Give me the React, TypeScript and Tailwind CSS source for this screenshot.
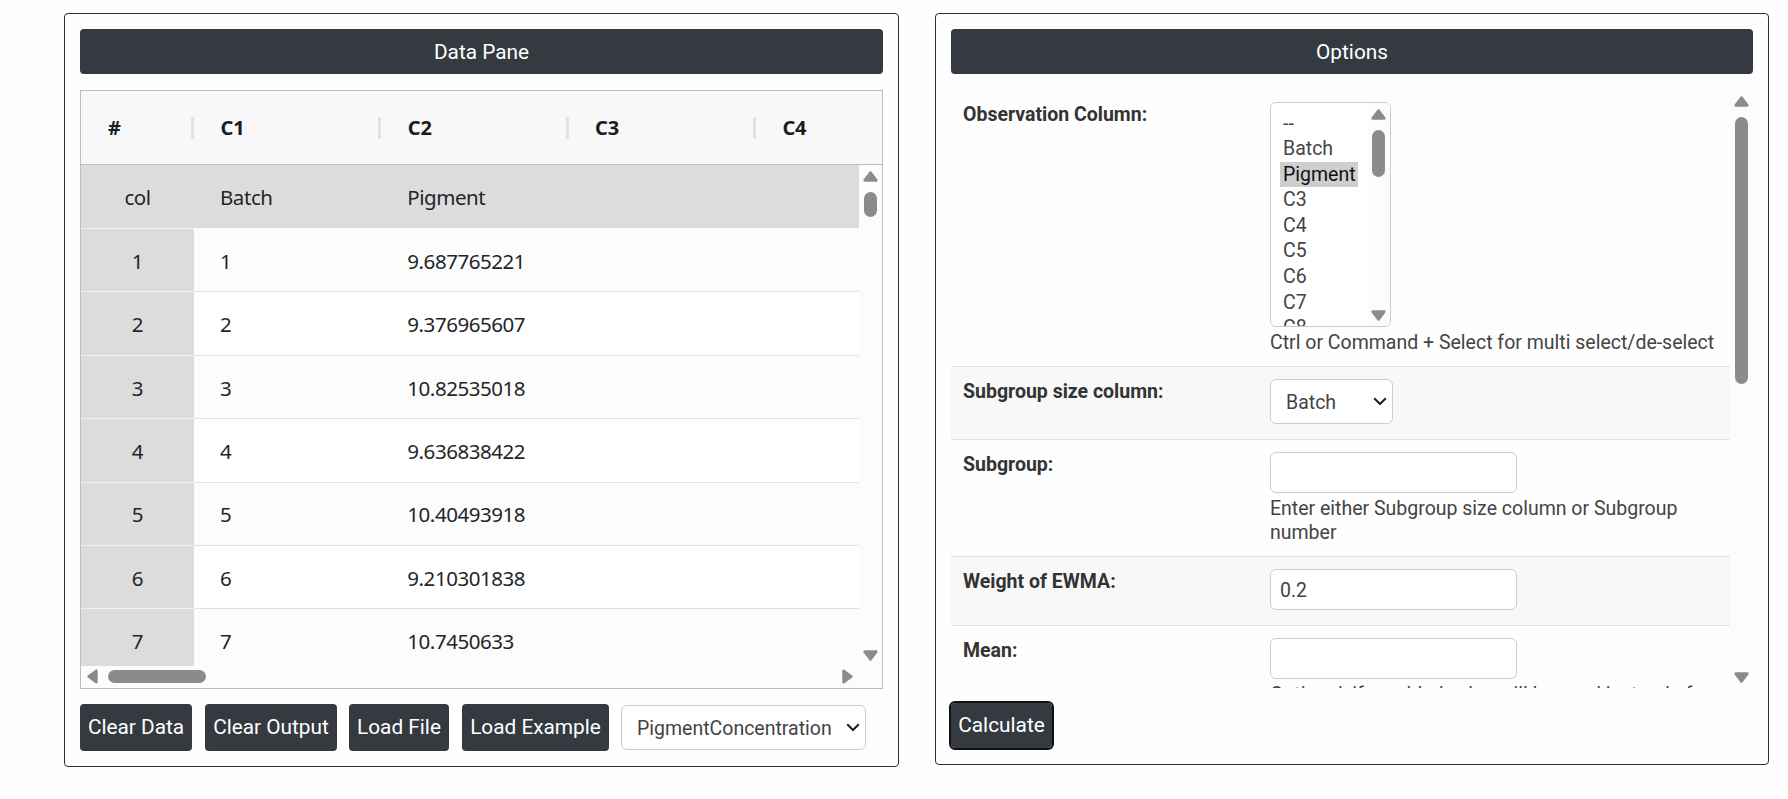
import { useState } from 'react';

const COLUMNS = ['C1', 'C2', 'C3', 'C4'];

const ROWS = [
  ['1', '9.687765221'],
  ['2', '9.376965607'],
  ['3', '10.82535018'],
  ['4', '9.636838422'],
  ['5', '10.40493918'],
  ['6', '9.210301838'],
  ['7', '10.7450633'],
];

const OBSERVATION_OPTIONS = ['--', 'Batch', 'Pigment', 'C3', 'C4', 'C5', 'C6', 'C7', 'C8'];

type Direction = 'up' | 'down' | 'left' | 'right';

const ARROW_ROTATION: Record<Direction, string> = {
  up: 'rotate-0',
  down: 'rotate-180',
  left: '-rotate-90',
  right: 'rotate-90',
};

function Arrow({ direction }: { direction: Direction }) {
  return (
    <svg viewBox="0 0 15 11" className={`w-[15px] h-[11px] shrink-0 ${ARROW_ROTATION[direction]}`}>
      <path
        d="M7.5 1.6 L13.3 9.4 H1.7 Z"
        fill="#8b8b8b"
        stroke="#8b8b8b"
        strokeWidth="2.6"
        strokeLinejoin="round"
      />
    </svg>
  );
}

function Chevron() {
  return (
    <svg viewBox="0 0 14 9" className="w-[14px] h-[9px] shrink-0">
      <path d="M1.2 1.2 L7 7 L12.8 1.2" fill="none" stroke="#222" strokeWidth="2.1" />
    </svg>
  );
}

function PaneTitle({ children }: { children: string }) {
  return (
    <h2 className="h-[45px] shrink-0 rounded bg-[#343a40] text-white text-[20.8px] leading-[46px] text-center">
      {children}
    </h2>
  );
}

function DataGrid() {
  return (
    <div className="mt-4 h-[599px] border border-[#bbbdbf] bg-[#fcfcfc] flex flex-col font-['Noto_Sans',sans-serif] text-[20.5px] tracking-[-0.45px] text-[#222628]">
      {/* Column headers */}
      <div className="h-[74px] shrink-0 flex items-center border-b border-[#bbbdbf] bg-[#f8f8f8] font-bold text-[20px] tracking-[-0.2px] text-[#181d1f] overflow-hidden">
        <div className="w-[113px] shrink-0 flex items-center justify-between pl-[27px]">
          <span className="pt-px">#</span>
          <span className="w-[3px] h-[22px] bg-[#dde2eb]" />
        </div>
        {COLUMNS.map((col) => (
          <div key={col} className="w-[187.3px] shrink-0 flex items-center justify-between pl-[26.5px]">
            <span className="pt-px">{col}</span>
            <span className="w-[3px] h-[22px] bg-[#dde2eb]" />
          </div>
        ))}
      </div>

      <div className="flex h-[501px] shrink-0">
        <div className="w-[778px] overflow-hidden">
          <div className="h-[63px] pt-px flex items-center bg-[#dcdcdc]">
            <div className="w-[113px] text-center">col</div>
            <div className="w-[187.3px] pl-[26px]">Batch</div>
            <div className="pl-[26px]">Pigment</div>
          </div>
          {ROWS.map(([index, value], i) => (
            <div key={index} className={`h-[63.4px] flex ${i % 2 ? 'bg-white' : 'bg-[#fcfcfc]'}`}>
              <div className="w-[113px] pt-[2px] flex items-center justify-center bg-[#dcdcdc] border-t border-[#f0f1f1]">
                {index}
              </div>
              <div
                className={`flex-1 pt-[2px] flex items-center border-t ${i === 0 ? 'border-transparent' : 'border-[#dde2e3]'}`}
              >
                <div className="w-[187.3px] pl-[26px]">{index}</div>
                <div className="pl-[26px]">{value}</div>
              </div>
            </div>
          ))}
        </div>
        <div className="flex-1 flex flex-col items-center pt-[6px] pb-[5px]">
          <Arrow direction="up" />
          <div className="mt-[10px] w-[13px] h-[25px] rounded-full bg-[#8b8b8b]" />
          <div className="mt-auto">
            <Arrow direction="down" />
          </div>
        </div>
      </div>

      <div className="flex-1 w-[778px] flex items-center pl-[4px] pr-[4px] pb-[1px]">
        <Arrow direction="left" />
        <div className="ml-[8px] w-[98px] h-[13px] rounded-full bg-[#8b8b8b]" />
        <div className="ml-auto flex">
          <Arrow direction="right" />
        </div>
      </div>
    </div>
  );
}

function Button({ label, className }: { label: string; className: string }) {
  return (
    <button
      className={`shrink-0 rounded bg-[#343a40] text-white text-[20.8px] whitespace-nowrap ${className}`}
    >
      {label}
    </button>
  );
}

function SelectBox({ value, className }: { value: string; className: string }) {
  return (
    <div
      className={`h-[45px] flex items-center justify-between rounded-md border border-[#ccc] bg-white pl-[15px] pr-[5px] text-[19.5px] text-[#444] ${className}`}
    >
      <span className="pt-[2px]">{value}</span>
      <Chevron />
    </div>
  );
}

function ObservationList() {
  const [selected, setSelected] = useState('Pigment');

  return (
    <div className="w-[121px] h-[225px] flex rounded-md border border-[#ccc] bg-white overflow-hidden">
      <div className="flex-1 pt-[7.5px] pl-[9px]">
        {OBSERVATION_OPTIONS.map((option) => (
          <div
            key={option}
            onClick={() => setSelected(option)}
            className={`w-[78px] h-[25.6px] pl-[3px] leading-[25px] ${
              option === selected ? 'bg-[#cecece] text-[#111]' : 'text-[#444]'
            }`}
          >
            {option}
          </div>
        ))}
      </div>
      <div className="w-[23px] flex flex-col items-center justify-between bg-[#fcfcfc] pt-[6px] pb-[5px]">
        <div className="flex flex-col items-center gap-[10px]">
          <Arrow direction="up" />
          <div className="w-[13px] h-[47px] rounded-full bg-[#8b8b8b]" />
        </div>
        <Arrow direction="down" />
      </div>
    </div>
  );
}

interface OptionRowProps {
  label: string;
  className: string;
  children: React.ReactNode;
}

function OptionRow({ label, className, children }: OptionRowProps) {
  return (
    <div className={`flex shrink-0 pl-[12px] pt-[12px] ${className}`}>
      <label className="w-[307px] shrink-0 font-bold leading-[26px] text-[#333]">{label}</label>
      <div className="flex-1 pr-[12px]">{children}</div>
    </div>
  );
}

function TextInput({ value = '' }: { value?: string }) {
  return (
    <input
      defaultValue={value}
      className="block w-[247px] h-[41px] rounded-md border border-[#ccc] bg-white px-[9px] pt-[2px] text-[19.5px] text-[#444]"
    />
  );
}

export default function App() {
  return (
    <div className="h-[799px] bg-[#fefefe] flex items-start gap-9 pl-16 pt-[13px] overflow-hidden font-[Roboto,sans-serif]">
      {/* Data pane */}
      <section className="w-[835px] h-[754px] shrink-0 rounded border border-[#2b2f33] p-[15px] flex flex-col">
        <PaneTitle>Data Pane</PaneTitle>
        <DataGrid />
        <div className="mt-[15px] flex items-center">
          <Button label="Clear Data" className="w-[112px] h-[47px] pt-px" />
          <Button label="Clear Output" className="ml-[13px] w-[132px] h-[47px] pt-px" />
          <Button label="Load File" className="ml-[12px] w-[100px] h-[47px] pt-px" />
          <Button label="Load Example" className="ml-[13px] w-[147px] h-[47px] pt-px" />
          <SelectBox value="PigmentConcentration" className="ml-[12px] w-[245px]" />
        </div>
      </section>

      {/* Options */}
      <section className="w-[834px] h-[752px] shrink-0 rounded border border-[#2b2f33] p-[15px] flex flex-col">
        <PaneTitle>Options</PaneTitle>
        <div className="mt-4 h-[598px] shrink-0 flex text-[19.5px] text-[#444] overflow-hidden">
          <div className="w-[779px] shrink-0 flex flex-col">
            <OptionRow label="Observation Column:" className="h-[276px]">
              <ObservationList />
              <p className="mt-[4px] leading-[24px] whitespace-nowrap">
                Ctrl or Command + Select for multi select/de-select
              </p>
            </OptionRow>
            <OptionRow label="Subgroup size column:" className="h-[73px] border-t border-[#e3e3e3] bg-[#f8f8f8]">
              <SelectBox value="Batch" className="w-[123px]" />
            </OptionRow>
            <OptionRow label="Subgroup:" className="h-[117px] border-t border-[#e3e3e3]">
              <TextInput />
              <p className="mt-[4px] leading-[24px]">
                Enter either Subgroup size column or Subgroup number
              </p>
            </OptionRow>
            <OptionRow label="Weight of EWMA:" className="h-[69px] border-t border-[#e3e3e3] bg-[#f8f8f8]">
              <TextInput value="0.2" />
            </OptionRow>
            <OptionRow label="Mean:" className="h-[117px] border-t border-[#e3e3e3]">
              <TextInput />
              <p className="mt-[4px] leading-[24px]">
                Optional: if provided value will be used instead of calculated mean
              </p>
            </OptionRow>
          </div>
          <div className="ml-auto w-[23px] flex flex-col items-center justify-between bg-[#fcfcfc] pt-[6px] pb-[5px]">
            <div className="flex flex-col items-center gap-[10px]">
              <Arrow direction="up" />
              <div className="w-[13px] h-[267px] rounded-full bg-[#8b8b8b]" />
            </div>
            <Arrow direction="down" />
          </div>
        </div>
        <div className="mt-[15px] flex">
          <Button label="Calculate" className="w-[101px] h-[45px] outline-2 outline-[#101010]" />
        </div>
      </section>
    </div>
  );
}
